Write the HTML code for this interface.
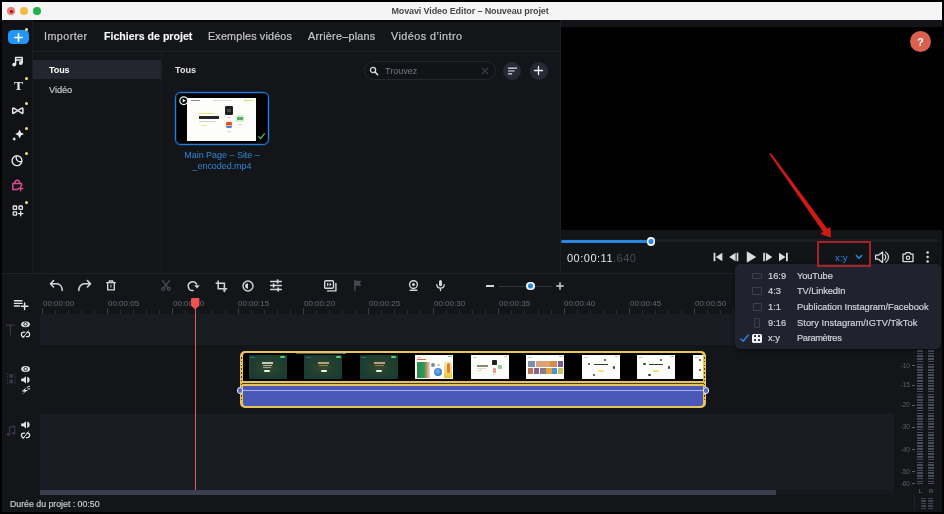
<!DOCTYPE html>
<html lang="fr">
<head>
<meta charset="utf-8">
<title>Movavi Video Editor – Nouveau projet</title>
<style>
*{box-sizing:border-box;margin:0;padding:0}
html,body{width:944px;height:514px;overflow:hidden;background:#000}
body{position:relative;font-family:"Liberation Sans",sans-serif;color:#c6c7cc;font-size:11px}
.a{position:absolute}
.t{position:absolute;white-space:nowrap;line-height:14px;height:14px;will-change:transform}
svg{position:absolute;overflow:visible}
#win{left:2px;top:2px;width:940px;height:510px;background:#141519}
.dot{position:absolute;top:7.2px;width:7.6px;height:7.6px;border-radius:50%}
.yd{position:absolute;left:25px;width:3px;height:3px;border-radius:50%;background:#f3e08a}
.tab{top:29px;font-size:10.8px;color:#c4c5ca;-webkit-text-stroke:0.2px #c4c5ca}
.mi{font-size:9.3px;color:#cfd1d8;-webkit-text-stroke:0.2px #cfd1d8}
.rl{top:298.2px;font-size:8px;color:#666975;line-height:12px;height:12px}
.ml{font-size:6.5px;color:#5d606b;line-height:8px;height:8px;width:20px;text-align:right;left:890px}
</style>
</head>
<body>
<div id="win" class="a"></div>

<!-- ===== title bar ===== -->
<div class="a" style="left:2px;top:2px;width:940px;height:18px;background:#f5f5f6"></div>
<div class="dot" style="left:7.2px;background:#ee7b78"></div>
<div class="a" style="left:9.5px;top:9.5px;width:3px;height:3px;border-radius:50%;background:#9c0a08"></div>
<div class="dot" style="left:20.2px;background:#f6bb45"></div>
<div class="dot" style="left:33.2px;background:#22b24d"></div>
<div class="t" style="left:0px;width:940px;text-align:center;top:4px;font-weight:bold;font-size:9px;letter-spacing:-0.115px;color:#48484b">Movavi Video Editor – Nouveau projet</div>

<div class="a" style="left:2px;top:20px;width:940px;height:1.5px;background:#07070a"></div>
<!-- ===== left toolbar ===== -->
<div class="a" style="left:2px;top:20px;width:30px;height:253px;background:#111216"></div>
<div class="a" style="left:32px;top:20px;width:1px;height:253px;background:#1c1d22"></div>
<div class="a" style="left:7.5px;top:29.5px;width:21px;height:14.5px;border-radius:4.5px;background:#2196f8"></div>
<svg style="left:13.5px;top:32.5px" width="9" height="9" viewBox="0 0 9 9"><path d="M4.5 0.8v7.4M0.8 4.5h7.4" stroke="#fff" stroke-width="1.7" stroke-linecap="round" fill="none"/></svg>
<div class="yd" style="top:28px"></div>
<div class="yd" style="top:77.2px"></div>
<div class="yd" style="top:102.4px"></div>
<div class="yd" style="top:126.8px"></div>
<div class="yd" style="top:151.5px"></div>
<div class="yd" style="top:201.1px"></div>
<!--LTB-START-->
<svg style="left:0;top:0" width="944" height="514" viewBox="0 0 944 514"><g fill="none" stroke="#e6e7ec" stroke-width="1.5" stroke-linejoin="round" stroke-linecap="round"><path d="M15.6 64.2V57.6H22.2V62.6M15.6 60H22.2"/></g><circle cx="14.2" cy="64.6" r="1.9" fill="#e6e7ec"/><circle cx="20.8" cy="63" r="1.9" fill="#e6e7ec"/><path d="M17.8 110.7L13.8 108.2Q12.7 107.6 12.7 108.9V112.5Q12.7 113.8 13.8 113.2L21.8 108.2Q22.9 107.6 22.9 108.9V112.5Q22.9 113.8 21.8 113.2z" fill="none" stroke="#e6e7ec" stroke-width="1.5" stroke-linejoin="round"/><path d="M19.6 129.6L21 132.6L24 134L21 135.4L19.6 138.4L18.2 135.4L15.2 134L18.2 132.6z" fill="#e6e7ec"/><path d="M14.2 137L15 138.2L16.2 139L15 139.8L14.2 141L13.4 139.8L12.2 139L13.4 138.2z" fill="#e6e7ec"/><circle cx="17" cy="160.7" r="4.9" fill="none" stroke="#e6e7ec" stroke-width="1.4"/><path d="M16.2 156.2C15.6 160 17.8 162.4 21.6 161.6" fill="none" stroke="#e6e7ec" stroke-width="1.3"/><g fill="none" stroke="#d94b8c" stroke-width="1.5" stroke-linejoin="round" stroke-linecap="round"><path d="M17.6 189.6H12.8V183.4H21.6V185.4M14.8 183.2C14.8 179.4 19.6 179.4 19.6 183.2"/><path d="M20.6 186.4V190.8M18.4 188.6H22.8"/></g><g fill="none" stroke="#e6e7ec" stroke-width="1.3"><rect x="13.2" y="206" width="3.4" height="3.4" rx=".6"/><rect x="19" y="206" width="3.4" height="3.4" rx=".6"/><rect x="13.2" y="211.8" width="3.4" height="3.4" rx=".6"/><path d="M20.7 211.4V215.8M18.5 213.6H22.9" stroke-linecap="round"/></g></svg>
<div class="t" style="left:11.5px;top:78.5px;width:13px;text-align:center;font-family:'Liberation Serif',serif;font-weight:bold;font-size:13.5px;line-height:14px;color:#e6e7ec">T</div>
<!--LTB-END-->

<!-- ===== tabs ===== -->
<div class="t tab" style="left:44px;letter-spacing:0.42px">Importer</div>
<div class="t tab" style="left:104px;color:#fff;font-weight:bold;font-size:10.6px;letter-spacing:0px">Fichiers de projet</div>
<div class="t tab" style="left:207.5px;letter-spacing:0.16px">Exemples vidéos</div>
<div class="t tab" style="left:307.5px;letter-spacing:0.25px">Arrière–plans</div>
<div class="t tab" style="left:391px;letter-spacing:0.45px">Vidéos d’intro</div>
<div class="a" style="left:33px;top:50.5px;width:527px;height:1px;background:#202127"></div>

<!-- ===== category list ===== -->
<div class="a" style="left:33px;top:60px;width:128px;height:19px;background:#23262f"></div>
<div class="t" style="left:49px;top:62.5px;color:#fff;font-weight:bold;font-size:9px;letter-spacing:-0.1px">Tous</div>
<div class="t" style="left:49px;top:82.5px;color:#c4c5ca;-webkit-text-stroke:0.2px #c4c5ca;font-size:9.2px;letter-spacing:-0.05px">Vidéo</div>
<div class="a" style="left:161px;top:51px;width:1px;height:222px;background:#1d1e24"></div>

<!-- ===== media bin ===== -->
<div class="t" style="left:175px;top:62.5px;color:#e6e6ea;font-weight:bold;font-size:9px;letter-spacing:0.1px">Tous</div>
<div class="a" style="left:363.5px;top:61px;width:132px;height:19px;border-radius:10px;border:1px solid #25272e;background:#121317"></div>
<svg style="left:368.5px;top:66px" width="10" height="10" viewBox="0 0 10 10"><circle cx="4" cy="4" r="2.6" fill="none" stroke="#d8d9de" stroke-width="1.3"/><path d="M6 6l2.6 2.6" stroke="#d8d9de" stroke-width="1.5" stroke-linecap="round"/></svg>
<div class="t" style="left:384.5px;top:63.5px;font-size:9px;color:#787a84">Trouvez</div>
<svg style="left:481px;top:66.5px" width="8" height="8" viewBox="0 0 8 8"><path d="M1 1l6 6M7 1l-6 6" stroke="#3f4149" stroke-width="1.1" fill="none"/></svg>
<div class="a" style="left:503px;top:61.5px;width:18px;height:18px;border-radius:50%;background:#262a36"></div>
<svg style="left:507.5px;top:66.5px" width="9" height="8" viewBox="0 0 9 8"><path d="M0.5 1.2h8M0.5 4h5.6M0.5 6.8h3.2" stroke="#e4e5ea" stroke-width="1.2" stroke-linecap="round" fill="none"/></svg>
<div class="a" style="left:529.5px;top:61.5px;width:18px;height:18px;border-radius:50%;background:#262a36"></div>
<svg style="left:534px;top:66px" width="9" height="9" viewBox="0 0 9 9"><path d="M4.5 0.5v8M0.5 4.5h8" stroke="#f0f0f4" stroke-width="1.3" stroke-linecap="round" fill="none"/></svg>

<!-- thumbnail -->
<div class="a" style="left:175px;top:91.6px;width:94.4px;height:53.6px;border-radius:5.5px;border:1.6px solid #2b7fd3;background:#000;box-shadow:0 0 0 1px #0f2a4a,inset 0 0 0 1px #0a1c33"></div>
<div class="a" style="left:187.2px;top:98.3px;width:69px;height:42.4px;background:#fdfdfb"></div>
<!--TH-START-->
<div class="a" style="left:191.0px;top:100.1px;width:9.0px;height:1.1px;background:#8a8a88"></div>
<div class="a" style="left:213.0px;top:100.2px;width:19.0px;height:0.9px;background:#dcdcd8"></div>
<div class="a" style="left:244.0px;top:99.6px;width:9.5px;height:1.6px;background:linear-gradient(90deg,#9be27a,#e6ee6a);border-radius:1px"></div>
<div class="a" style="left:199.0px;top:112.8px;width:15.0px;height:1.2px;background:#f0e27e"></div>
<div class="a" style="left:199.0px;top:116.4px;width:20.0px;height:2.2px;background:#262626"></div>
<div class="a" style="left:199.0px;top:121.0px;width:17.0px;height:1.0px;background:#d2d2cc"></div>
<div class="a" style="left:201.0px;top:125.0px;width:6.0px;height:1.4px;background:#f2e79a;border-radius:1px"></div>
<div class="a" style="left:224.7px;top:106.4px;width:8.6px;height:8.4px;background:#1d1d1d;border-radius:1.2px"></div>
<div class="a" style="left:226.6px;top:109.0px;width:4.8px;height:3.0px;background:#4a4a4a"></div>
<div class="a" style="left:227.0px;top:116.6px;width:4.0px;height:0.8px;background:#d0d0d0"></div>
<div class="a" style="left:236.0px;top:114.6px;width:7.8px;height:7.4px;background:#d2f2cc;border-radius:1.2px"></div>
<div class="a" style="left:237.2px;top:117.4px;width:5.4px;height:2.2px;background:#55b060"></div>
<div class="a" style="left:237.6px;top:124.0px;width:4.6px;height:0.8px;background:#d8d8d4"></div>
<div class="a" style="left:225.9px;top:121.8px;width:6.5px;height:6.5px;background:linear-gradient(180deg,#e8463e 0,#e8463e 45%,#f4c23a 45%,#f4c23a 70%,#4a7fe0 70%);border-radius:1.4px;box-shadow:0 0 2px #f3e6c0"></div>
<div class="a" style="left:227.2px;top:130.6px;width:4.0px;height:0.8px;background:#d8d8d4"></div>
<svg style="left:178.6px;top:96.2px" width="9.4" height="9.4" viewBox="0 0 9.4 9.4"><circle cx="4.7" cy="4.7" r="3.9" fill="#050505" stroke="#f2f2f2" stroke-width="1.2"/><path d="M3.7 2.8V6.6L6.8 4.7z" fill="#f2f2f2"/></svg>
<svg style="left:257.6px;top:132.6px" width="7" height="6.6" viewBox="0 0 7 6.6"><path d="M0.7 3.6L2.6 5.6L6.3 0.8" fill="none" stroke="#3fc46c" stroke-width="1.3" stroke-linecap="round" stroke-linejoin="round"/></svg>
<!--TH-END-->
<div class="t" style="left:172px;width:100px;text-align:center;top:148px;font-size:9px;color:#2f86da;letter-spacing:-0.03px">Main Page – Site –</div>
<div class="t" style="left:172px;width:100px;text-align:center;top:158.5px;font-size:9px;color:#2f86da;letter-spacing:-0.05px">_encoded.mp4</div>

<!-- ===== preview ===== -->
<div class="a" style="left:559.6px;top:20px;width:1px;height:253px;background:#1d1e24"></div>
<div class="a" style="left:560.6px;top:20px;width:381.4px;height:253px;background:#131418"></div>
<div class="a" style="left:561px;top:27px;width:381px;height:202.5px;background:#000"></div>
<div class="a" style="left:910px;top:31px;width:21px;height:21px;border-radius:50%;background:#d9614d"></div>
<div class="t" style="left:910px;width:21px;text-align:center;top:34.8px;font-size:10.5px;font-weight:bold;color:#fff">?</div>
<svg style="left:0;top:0" width="944" height="514" viewBox="0 0 944 514"><path d="M770.9 153.5L827.3 229.2L830.2 227.6L830.6 237.2L820.6 233.7L823.5 232.1L769.7 154.3z" fill="#cf1c12" stroke="#cf1c12" stroke-width="0.6" stroke-linejoin="round"/></svg>

<!-- progress -->
<div class="a" style="left:561px;top:238.6px;width:378px;height:3.6px;border-radius:1.5px;background:#1b1d23"></div>
<div class="a" style="left:561px;top:240.3px;width:90px;height:3px;border-radius:1.5px;background:#2a86e0"></div>
<div class="a" style="left:646.6px;top:237.4px;width:8.8px;height:8.8px;border-radius:50%;background:radial-gradient(circle,#2a86e0 0,#2a86e0 2.2px,#f0f5fc 2.9px)"></div>
<div class="t" style="left:566.5px;top:250.5px;font-size:11px;letter-spacing:0.5px;color:#e4e5ea">00:00:11<span style="color:#4a4c55">.640</span></div>
<!--TRANSPORT-->

<!-- ===== divider ===== -->
<div class="a" style="left:2px;top:272.5px;width:940px;height:1px;background:#22232a"></div>

<!--TL-START-->
<!-- timeline toolbar -->
<svg style="left:49px;top:279px" width="15" height="13" viewBox="0 0 15 13"><path d="M4.6 1.6 L1.4 4.8 L4.6 8 M1.6 4.8 H7.5 C11 4.8 13.2 7.6 13.2 11.6" fill="none" stroke="#d4d5dc" stroke-width="1.5" stroke-linecap="round" stroke-linejoin="round"/></svg>
<svg style="left:76.5px;top:279px" width="15" height="13" viewBox="0 0 15 13"><path d="M10.4 1.6 L13.6 4.8 L10.4 8 M13.4 4.8 H7.5 C4 4.8 1.8 7.6 1.8 11.6" fill="none" stroke="#d4d5dc" stroke-width="1.5" stroke-linecap="round" stroke-linejoin="round"/></svg>
<svg style="left:106px;top:280px" width="10" height="11" viewBox="0 0 10 11"><path d="M0.6 2.6H9.4M3.3 2.4V1h3.4v1.4M1.7 2.8V9.9h6.6V2.8" fill="none" stroke="#d4d5dc" stroke-width="1.4" stroke-linejoin="round" stroke-linecap="round"/><rect x="4.2" y="4.6" width="1.6" height="3" fill="#d4d5dc" opacity=".55"/></svg>
<svg style="left:160.5px;top:280px" width="10" height="11" viewBox="0 0 10 11"><path d="M1.6 0.6L7.2 8M8.4 0.6L2.8 8" stroke="#454753" stroke-width="1.5" stroke-linecap="round" fill="none"/><circle cx="2.2" cy="8.8" r="1.5" fill="none" stroke="#454753" stroke-width="1.3"/><circle cx="7.8" cy="8.8" r="1.5" fill="none" stroke="#454753" stroke-width="1.3"/></svg>
<svg style="left:187px;top:280px" width="13" height="12" viewBox="0 0 13 12"><path d="M9.6 4.2A4.4 4.4 0 1 0 6 10.6" fill="none" stroke="#d4d5dc" stroke-width="1.5" stroke-linecap="round"/><path d="M7.3 5.2h5.4l-2.7 3.2z" fill="#d4d5dc"/></svg>
<svg style="left:215px;top:279.5px" width="13" height="13" viewBox="0 0 13 13"><path d="M3.2 0.6V8.8H12.2M0.6 3.2H9.4V10.4" fill="none" stroke="#d4d5dc" stroke-width="1.5" stroke-linejoin="miter"/><path d="M7.6 10.2h3.6l-1.8 2.2z" fill="#d4d5dc"/><path d="M1.4 0.8h3.6L3.2 -0.6z" fill="#d4d5dc" opacity="0"/></svg>
<svg style="left:242px;top:279.5px" width="12" height="12" viewBox="0 0 12 12"><circle cx="6" cy="6" r="5" fill="none" stroke="#d4d5dc" stroke-width="1.4"/><path d="M6 3.2A2.8 2.8 0 0 0 6 8.8z" fill="#d4d5dc"/></svg>
<svg style="left:270px;top:280px" width="12" height="11" viewBox="0 0 12 11"><path d="M0.6 1.5H11.4M0.6 5.5H11.4M0.6 9.5H11.4" stroke="#d4d5dc" stroke-width="1.3" stroke-linecap="round"/><path d="M7.6 0.2v2.6M3.6 4.2v2.6M8.2 8.2v2.6" stroke="#d4d5dc" stroke-width="1.8" stroke-linecap="round"/></svg>
<svg style="left:324px;top:279.5px" width="13" height="12" viewBox="0 0 13 12"><rect x="0.7" y="0.7" width="8.8" height="7.6" rx="1" fill="none" stroke="#d4d5dc" stroke-width="1.4"/><path d="M11.9 3.4V10.9H3.6" fill="none" stroke="#d4d5dc" stroke-width="1.4" stroke-linejoin="round" stroke-linecap="round"/><path d="M3 2.6L5 4.5L3 6.4zM5.6 2.6L7.6 4.5L5.6 6.4z" fill="#d4d5dc"/></svg>
<svg style="left:354px;top:280px" width="8" height="11" viewBox="0 0 8 11"><path d="M0.8 0.4V10.8" stroke="#454753" stroke-width="1.4" stroke-linecap="round"/><path d="M1 0.8H7.4L6 3.3L7.4 5.8H1z" fill="#454753"/></svg>
<svg style="left:407.5px;top:280px" width="11" height="11" viewBox="0 0 11 11"><circle cx="5.5" cy="4.6" r="3.9" fill="none" stroke="#d4d5dc" stroke-width="1.4"/><circle cx="5.5" cy="4.6" r="1.5" fill="#d4d5dc"/><path d="M2.2 10.2H8.8" stroke="#d4d5dc" stroke-width="1.5" stroke-linecap="round"/></svg>
<svg style="left:435.5px;top:280px" width="9" height="11" viewBox="0 0 9 11"><rect x="3" y="0" width="3" height="6.2" rx="1.5" fill="#d4d5dc"/><path d="M0.8 4.6C0.8 9.4 8.2 9.4 8.2 4.6M4.5 8.2V10.6" fill="none" stroke="#d4d5dc" stroke-width="1.3" stroke-linecap="round"/></svg>
<div class="a" style="left:486px;top:285.2px;width:7.6px;height:1.5px;background:#d4d5dc"></div>
<div class="a" style="left:498.5px;top:285.5px;width:53px;height:1px;background:#33363f"></div>
<div class="a" style="left:526px;top:281.7px;width:8.8px;height:8.8px;border-radius:50%;background:radial-gradient(circle,#2a86e0 0,#2a86e0 2.2px,#f0f5fc 2.9px)"></div>
<svg style="left:556px;top:282px" width="8" height="8" viewBox="0 0 8 8"><path d="M4 0.3v7.4M0.3 4h7.4" stroke="#d4d5dc" stroke-width="1.4" fill="none"/></svg>
<!-- tracks -->
<div class="a" style="left:40px;top:314px;width:854px;height:31px;background:#1a1c24"></div>
<div class="a" style="left:40px;top:413.5px;width:854px;height:76.5px;background:#1a1c24"></div>
<div class="a" style="left:42px;top:310px;width:852px;height:4px;background:repeating-linear-gradient(90deg,#272931 0,#272931 1px,transparent 1px,transparent 13.04px)"></div>
<div class="a" style="left:42px;top:308px;width:852px;height:6px;background:repeating-linear-gradient(90deg,#3a3d48 0,#3a3d48 1px,transparent 1px,transparent 65.2px)"></div>
<div class="t rl" style="left:42.8px">00:00:00</div>
<div class="t rl" style="left:108.0px">00:00:05</div>
<div class="t rl" style="left:173.2px">00:00:10</div>
<div class="t rl" style="left:238.4px">00:00:15</div>
<div class="t rl" style="left:303.6px">00:00:20</div>
<div class="t rl" style="left:368.8px">00:00:25</div>
<div class="t rl" style="left:434.0px">00:00:30</div>
<div class="t rl" style="left:499.2px">00:00:35</div>
<div class="t rl" style="left:564.4px">00:00:40</div>
<div class="t rl" style="left:629.6px">00:00:45</div>
<div class="t rl" style="left:694.8px">00:00:50</div>
<div class="a" style="left:40px;top:490px;width:854px;height:4.5px;background:#17181d"></div>
<div class="a" style="left:40px;top:490px;width:736px;height:4.5px;background:#3b3e4d"></div>
<div class="t" style="left:10px;top:496.5px;font-size:8.8px;letter-spacing:-0.02px;color:#c9cad0;-webkit-text-stroke:0.2px #c9cad0">Durée du projet : 00:50</div>
<!-- clip -->
<div class="a" style="left:240px;top:350.5px;width:466.3px;height:57px;border-radius:5px;background:#e8c25a"></div>
<div class="a" style="left:243.4px;top:352.6px;width:459.6px;height:28.2px;border-radius:3px 3px 0 0;background:#000"></div>
<div class="a" style="left:242px;top:383.1px;width:462.3px;height:1px;background:#15161a;opacity:.75"></div>
<div class="a" style="left:243.4px;top:385.8px;width:459.6px;height:19.8px;border-radius:0 0 3px 3px;background:#4a59b8"></div>
<div class="a" style="left:243.4px;top:389.6px;width:459.6px;height:1.5px;background:#aab4ee"></div>
<div class="a" style="left:240.9px;top:357px;width:1.5px;height:45px;background:repeating-linear-gradient(180deg,#4d3f12 0,#4d3f12 1.5px,transparent 1.5px,transparent 3.8px)"></div>
<div class="a" style="left:703.9px;top:357px;width:1.5px;height:45px;background:repeating-linear-gradient(180deg,#4d3f12 0,#4d3f12 1.5px,transparent 1.5px,transparent 3.8px)"></div>
<!--CT-START-->
<div class="a" style="left:296.0px;top:353.2px;width:49.0px;height:0.9px;background:#5a5a58"></div>
<div class="a" style="left:342.0px;top:353.0px;width:4.0px;height:1.2px;background:#4a86c8"></div>
<div class="a" style="left:248.7px;top:355.3px;width:38.3px;height:23.7px;background:radial-gradient(ellipse at 50% 50%,#3b4a26 0,#24402f 40%,#143a36 100%)"></div>
<div class="a" style="left:280.2px;top:356.4px;width:5.0px;height:1.4px;background:#62c96c;border-radius:1px"></div>
<div class="a" style="left:250.2px;top:356.6px;width:5.0px;height:0.9px;background:#3f6a62"></div>
<div class="a" style="left:261.7px;top:362.3px;width:11.0px;height:1.3px;background:#c9ccb8"></div>
<div class="a" style="left:262.7px;top:364.8px;width:9.0px;height:1.2px;background:#b3b8a6"></div>
<div class="a" style="left:263.2px;top:366.8px;width:8.0px;height:1.2px;background:#9aa294"></div>
<div class="a" style="left:264.2px;top:370.3px;width:6.0px;height:1.8px;background:#f4f4ee;border-radius:1px"></div>
<div class="a" style="left:304.2px;top:355.3px;width:38.3px;height:23.7px;background:radial-gradient(ellipse at 50% 50%,#3b4a26 0,#24402f 40%,#143a36 100%)"></div>
<div class="a" style="left:335.7px;top:356.4px;width:5.0px;height:1.4px;background:#62c96c;border-radius:1px"></div>
<div class="a" style="left:305.7px;top:356.6px;width:5.0px;height:0.9px;background:#3f6a62"></div>
<div class="a" style="left:318.2px;top:362.3px;width:11.0px;height:1.3px;background:#b9a27e"></div>
<div class="a" style="left:319.2px;top:364.8px;width:9.0px;height:1.2px;background:#8a7d62"></div>
<div class="a" style="left:320.7px;top:370.3px;width:6.0px;height:1.8px;background:#f4f4ee;border-radius:1px"></div>
<div class="a" style="left:359.7px;top:355.3px;width:38.3px;height:23.7px;background:radial-gradient(ellipse at 50% 50%,#3b4a26 0,#24402f 40%,#143a36 100%)"></div>
<div class="a" style="left:391.2px;top:356.4px;width:5.0px;height:1.4px;background:#62c96c;border-radius:1px"></div>
<div class="a" style="left:361.2px;top:356.6px;width:5.0px;height:0.9px;background:#3f6a62"></div>
<div class="a" style="left:373.7px;top:362.3px;width:11.0px;height:1.3px;background:#b9a27e"></div>
<div class="a" style="left:374.7px;top:364.8px;width:9.0px;height:1.2px;background:#8a7d62"></div>
<div class="a" style="left:376.2px;top:370.3px;width:6.0px;height:1.8px;background:#f4f4ee;border-radius:1px"></div>
<div class="a" style="left:415.2px;top:355.3px;width:38.3px;height:23.7px;background:#fcfcf8"></div>
<div class="a" style="left:417.0px;top:356.5px;width:4.0px;height:0.8px;background:#c8c8c0"></div>
<div class="a" style="left:448.2px;top:356.3px;width:3.5px;height:1.2px;background:#7fd08a"></div>
<div class="a" style="left:417.2px;top:359.1px;width:9.0px;height:1.3px;background:#e2672e"></div>
<div class="a" style="left:417.0px;top:362.3px;width:12.6px;height:15.5px;background:linear-gradient(90deg,#1f8a4c 0,#2d9a58 55%,#c98e6a 75%,#e6dccb 100%)"></div>
<div class="a" style="left:430.7px;top:362.8px;width:4.5px;height:4.0px;background:#8a8a86;border-radius:2px"></div>
<div class="a" style="left:437.2px;top:363.8px;width:3.0px;height:2.5px;background:#b9c6d8;border-radius:1px"></div>
<div class="a" style="left:433.7px;top:367.8px;width:8.5px;height:8.5px;background:radial-gradient(circle at 45% 40%,#7fb2e6 0,#2f78c8 70%);border-radius:50%"></div>
<div class="a" style="left:443.7px;top:362.3px;width:8.5px;height:15.5px;background:linear-gradient(180deg,#f3e7a8 0,#f0d457 70%,#e9c230 100%)"></div>
<div class="a" style="left:446.7px;top:363.3px;width:3.0px;height:10.0px;background:#d9623a;border-radius:1.5px;opacity:.8"></div>
<div class="a" style="left:470.7px;top:355.3px;width:38.3px;height:23.7px;background:#fdfdfb"></div>
<div class="a" style="left:472.5px;top:356.5px;width:4.0px;height:0.8px;background:#d0d0c8"></div>
<div class="a" style="left:503.7px;top:356.3px;width:3.5px;height:1.2px;background:#9bdca4"></div>
<div class="a" style="left:477.2px;top:365.3px;width:11.0px;height:1.3px;background:#8d8a70"></div>
<div class="a" style="left:477.2px;top:367.8px;width:9.0px;height:0.9px;background:#dcdccf"></div>
<div class="a" style="left:477.7px;top:370.3px;width:4.0px;height:1.0px;background:#e8dc9c"></div>
<div class="a" style="left:492.0px;top:360.1px;width:4.6px;height:4.6px;background:#232323;border-radius:.8px"></div>
<div class="a" style="left:497.9px;top:364.9px;width:4.4px;height:4.6px;background:#8fcf8c;border-radius:.8px"></div>
<div class="a" style="left:492.5px;top:367.8px;width:3.6px;height:5.0px;background:#e79a8a;border-radius:.8px"></div>
<div class="a" style="left:492.7px;top:373.6px;width:3.0px;height:0.8px;background:#d8d8d0"></div>
<div class="a" style="left:526.2px;top:355.3px;width:38.3px;height:23.7px;background:#fdfdfb"></div>
<div class="a" style="left:528.0px;top:356.5px;width:4.0px;height:0.8px;background:#d0d0c8"></div>
<div class="a" style="left:559.2px;top:356.3px;width:3.5px;height:1.2px;background:#9bdca4"></div>
<div class="a" style="left:528.0px;top:361.3px;width:7.1px;height:5.6px;background:#7f8fa6"></div>
<div class="a" style="left:535.5px;top:361.3px;width:7.1px;height:5.6px;background:#d9a27e"></div>
<div class="a" style="left:543.0px;top:361.3px;width:6.6px;height:5.6px;background:#e2a36b"></div>
<div class="a" style="left:550.0px;top:361.3px;width:7.1px;height:5.6px;background:#d48a52"></div>
<div class="a" style="left:557.5px;top:361.3px;width:5.1px;height:5.6px;background:#7a5e8e"></div>
<div class="a" style="left:528.0px;top:367.9px;width:5.1px;height:5.8px;background:#b7764f"></div>
<div class="a" style="left:533.5px;top:367.9px;width:5.6px;height:5.8px;background:#8a5f94"></div>
<div class="a" style="left:539.5px;top:367.9px;width:6.1px;height:5.8px;background:#8a7a90"></div>
<div class="a" style="left:546.0px;top:367.9px;width:5.6px;height:5.8px;background:#e0a33e"></div>
<div class="a" style="left:552.0px;top:367.9px;width:5.1px;height:5.8px;background:#4f8fd6"></div>
<div class="a" style="left:557.5px;top:367.9px;width:5.1px;height:5.8px;background:#c8c35a"></div>
<div class="a" style="left:581.7px;top:355.3px;width:38.3px;height:23.7px;background:#fdfdfb"></div>
<div class="a" style="left:583.5px;top:356.5px;width:4.0px;height:0.8px;background:#d0d0c8"></div>
<div class="a" style="left:614.7px;top:356.3px;width:3.5px;height:1.2px;background:#9bdca4"></div>
<div class="a" style="left:593.7px;top:363.8px;width:14.0px;height:1.2px;background:#3a3a38"></div>
<div class="a" style="left:597.7px;top:370.3px;width:6.2px;height:1.8px;background:#f0e27a;border-radius:1px"></div>
<div class="a" style="left:604.0px;top:358.5px;width:2.4px;height:2.4px;background:#3c4038;border-radius:50%"></div>
<div class="a" style="left:587.7px;top:362.5px;width:2.4px;height:2.4px;background:#3c4038;border-radius:50%"></div>
<div class="a" style="left:612.5px;top:366.3px;width:2.4px;height:2.4px;background:#3c4038;border-radius:50%"></div>
<div class="a" style="left:592.7px;top:373.8px;width:2.4px;height:2.4px;background:#3c4038;border-radius:50%"></div>
<div class="a" style="left:637.2px;top:355.3px;width:38.3px;height:23.7px;background:#fdfdfb"></div>
<div class="a" style="left:639.0px;top:356.5px;width:4.0px;height:0.8px;background:#d0d0c8"></div>
<div class="a" style="left:670.2px;top:356.3px;width:3.5px;height:1.2px;background:#9bdca4"></div>
<div class="a" style="left:649.2px;top:363.8px;width:14.0px;height:1.2px;background:#3a3a38"></div>
<div class="a" style="left:653.2px;top:370.3px;width:6.2px;height:1.8px;background:#f0e27a;border-radius:1px"></div>
<div class="a" style="left:659.5px;top:358.5px;width:2.4px;height:2.4px;background:#3c4038;border-radius:50%"></div>
<div class="a" style="left:643.2px;top:362.5px;width:2.4px;height:2.4px;background:#3c4038;border-radius:50%"></div>
<div class="a" style="left:668.0px;top:366.3px;width:2.4px;height:2.4px;background:#3c4038;border-radius:50%"></div>
<div class="a" style="left:648.2px;top:373.8px;width:2.4px;height:2.4px;background:#3c4038;border-radius:50%"></div>
<div class="a" style="left:692.7px;top:355.3px;width:10.3px;height:23.7px;background:#fdfdfb"></div>
<div class="a" style="left:694.5px;top:356.5px;width:4.0px;height:0.8px;background:#d0d0c8"></div>
<div class="a" style="left:698.7px;top:358.9px;width:2.2px;height:2.2px;background:#3c4038;border-radius:50%"></div>
<div class="a" style="left:698.9px;top:368.8px;width:2.2px;height:2.2px;background:#3c4038;border-radius:50%"></div>
<!--CT-END-->
<div class="a" style="left:237.0px;top:387.2px;width:6.4px;height:6.4px;border-radius:50%;background:#5a68c0;border:1.5px solid #e6e9f6"></div>
<div class="a" style="left:702.8px;top:387.2px;width:6.4px;height:6.4px;border-radius:50%;background:#5a68c0;border:1.5px solid #e6e9f6"></div>
<!-- playhead -->
<div class="a" style="left:194.6px;top:305px;width:1.3px;height:185px;background:#d6625d"></div>
<svg style="left:191px;top:298.3px" width="8.4" height="11" viewBox="0 0 8.4 11"><path d="M1.2 0H7.2Q8.4 0 8.4 1.2V7.6L4.9 10.8H3.5L0 7.6V1.2Q0 0 1.2 0z" fill="#f0534f"/></svg>
<!--HDR-START-->
<svg style="left:0;top:0" width="944" height="514" viewBox="0 0 944 514"><path d="M14.4 300.8H22M14.4 303.4H22M14.4 306H19.4" stroke="#e2e3e8" stroke-width="1.4" stroke-linecap="round" fill="none"/><path d="M24.6 303V309.6M21.3 306.3H27.9" stroke="#e2e3e8" stroke-width="1.5" stroke-linecap="round" fill="none"/><path d="M6 325.2H14.8M10.4 325.2V335.2" stroke="#343747" stroke-width="1.2" fill="none"/><ellipse cx="25.5" cy="324.3" rx="4.4" ry="2.9" fill="#e2e3e8"/><circle cx="25.5" cy="324.3" r="1.7" fill="none" stroke="#15161a" stroke-width="0.9"/><g fill="none" stroke="#e2e3e8" stroke-width="1.25" stroke-linecap="round"><path d="M24.6 332.2H23.6A2.2 2.2 0 0 0 23.6 336.6H24.0M26.4 336.6H27.4A2.2 2.2 0 0 0 27.4 332.2H27.0"/><path d="M22.9 337.8L28.3 330.9" stroke-width="1"/></g><g fill="#343747"><rect x="9.4" y="374" width="3.6" height="3.8"/><rect x="9.4" y="379.6" width="3.6" height="3.8"/></g><path d="M7.4 373.2V384.4M15 373.2V384.4" stroke="#343747" stroke-width="1.1" stroke-dasharray="1.6 1.4"/><ellipse cx="25.6" cy="369" rx="4.4" ry="2.9" fill="#e2e3e8"/><circle cx="25.6" cy="369" r="1.7" fill="none" stroke="#15161a" stroke-width="0.9"/><path d="M21.200000000000003 378.5H23.200000000000003L26.0 376.29999999999995V383.5L23.200000000000003 381.29999999999995H21.200000000000003z" fill="#e2e3e8"/><path d="M27.200000000000003 376.7A3.3 3.3 0 0 1 27.200000000000003 383.09999999999997z" fill="#e2e3e8"/><path d="M26.0 387.40000000000003L21.799999999999997 391.40000000000003H24.799999999999997L21.599999999999998 394.8L28.0 390.0H25.2z" fill="#e2e3e8"/><path d="M27.2 387.20000000000005L29.599999999999998 386.20000000000005M27.799999999999997 389.0L29.799999999999997 388.8" stroke="#e2e3e8" stroke-width="1" stroke-linecap="round"/><path d="M9.6 434.2V427.2L14.8 426.2V433" fill="none" stroke="#343747" stroke-width="1.2" stroke-linejoin="round"/><ellipse cx="8.4" cy="434.4" rx="1.6" ry="1.3" fill="#343747"/><ellipse cx="13.6" cy="433.2" rx="1.6" ry="1.3" fill="#343747"/><path d="M21.200000000000003 423.40000000000003H23.200000000000003L26.0 421.2V428.40000000000003L23.200000000000003 426.2H21.200000000000003z" fill="#e2e3e8"/><path d="M27.200000000000003 421.6A3.3 3.3 0 0 1 27.200000000000003 428.0z" fill="#e2e3e8"/><g fill="none" stroke="#e2e3e8" stroke-width="1.25" stroke-linecap="round"><path d="M24.6 433.1H23.6A2.2 2.2 0 0 0 23.6 437.5H24.0M26.4 437.5H27.4A2.2 2.2 0 0 0 27.4 433.1H27.0"/><path d="M22.9 438.7L28.3 431.8" stroke-width="1"/></g></svg>
<!-- meter -->
<div class="a" style="left:917.2px;top:349.5px;width:6.2px;height:134.6px;background:repeating-linear-gradient(180deg,#454a5c 0,#454a5c 1.6px,transparent 1.6px,transparent 2.72px)"></div>
<div class="a" style="left:927.8px;top:349.5px;width:6.2px;height:134.6px;background:repeating-linear-gradient(180deg,#454a5c 0,#454a5c 1.6px,transparent 1.6px,transparent 2.72px)"></div>
<div class="t ml" style="top:361.5px">-10</div>
<div class="a" style="left:912px;top:365.1px;width:3px;height:1px;background:#5b5e6a"></div>
<div class="t ml" style="top:381.0px">-15</div>
<div class="a" style="left:912px;top:384.6px;width:3px;height:1px;background:#5b5e6a"></div>
<div class="t ml" style="top:401.0px">-20</div>
<div class="a" style="left:912px;top:404.6px;width:3px;height:1px;background:#5b5e6a"></div>
<div class="t ml" style="top:423.0px">-30</div>
<div class="a" style="left:912px;top:426.6px;width:3px;height:1px;background:#5b5e6a"></div>
<div class="t ml" style="top:445.7px">-40</div>
<div class="a" style="left:912px;top:449.3px;width:3px;height:1px;background:#5b5e6a"></div>
<div class="t ml" style="top:467.8px">-50</div>
<div class="a" style="left:912px;top:471.4px;width:3px;height:1px;background:#5b5e6a"></div>
<div class="t ml" style="top:479.8px">-60</div>
<div class="a" style="left:912px;top:483.4px;width:3px;height:1px;background:#5b5e6a"></div>
<div class="t" style="left:917.2px;top:487px;width:6.2px;text-align:center;font-size:6px;line-height:8px;height:8px;color:#6a6d78">L</div>
<div class="t" style="left:927.8px;top:487px;width:6.2px;text-align:center;font-size:6px;line-height:8px;height:8px;color:#6a6d78">R</div>
<div class="a" style="left:920.6px;top:497.5px;width:5.8px;height:11.5px;background:repeating-linear-gradient(180deg,#3d4150 0,#3d4150 1.5px,transparent 1.5px,transparent 2.5px)"></div>
<div class="a" style="left:927.6px;top:497.5px;width:5.8px;height:11.5px;background:repeating-linear-gradient(180deg,#3d4150 0,#3d4150 1.5px,transparent 1.5px,transparent 2.5px)"></div>
<div class="a" style="left:913.5px;top:496px;width:1px;height:14px;background:#22242b"></div>
<!--HDR-END-->
<!--TL-END-->

<!--MENU-START-->
<!-- transport -->
<svg style="left:0;top:0" width="944" height="514" viewBox="0 0 944 514"><g fill="#dcdde3"><rect x="713.6" y="252.8" width="1.8" height="8.4"/><path d="M722.4 252.8V261.2L715.8 257z"/><path d="M735.6 252.8V261.2L729.2 257z"/><rect x="736.6" y="252.8" width="1.7" height="8.4"/><path d="M746.8 251.2V262.8L756.2 257z"/><rect x="763.2" y="252.8" width="1.7" height="8.4"/><path d="M765.9 252.8V261.2L772.3 257z"/><path d="M779 252.8V261.2L785.6 257z"/><rect x="786" y="252.8" width="1.8" height="8.4"/></g><path d="M875.6 255.2H878.4L882.6 252V262.4L878.4 259.2H875.6z" fill="none" stroke="#dcdde3" stroke-width="1.3" stroke-linejoin="round"/><path d="M884.6 254.6A3.4 3.4 0 0 1 884.6 259.8M885.8 252.2A6 6 0 0 1 885.8 262.2" fill="none" stroke="#dcdde3" stroke-width="1.2" stroke-linecap="round"/><path d="M903 254.2H905.2L906.2 252.6H909.8L910.8 254.2H913V261.6H903z" fill="none" stroke="#dcdde3" stroke-width="1.3" stroke-linejoin="round"/><circle cx="908" cy="257.8" r="1.7" fill="none" stroke="#dcdde3" stroke-width="1.2"/><circle cx="927.6" cy="252.6" r="1.25" fill="#dcdde3"/><circle cx="927.6" cy="257" r="1.25" fill="#dcdde3"/><circle cx="927.6" cy="261.4" r="1.25" fill="#dcdde3"/><path d="M856.4 255.6L859 258.2L861.6 255.6" fill="none" stroke="#2a86e0" stroke-width="1.5" stroke-linecap="round" stroke-linejoin="round"/></svg>
<div class="t" style="left:835.4px;top:250.5px;font-size:9.6px;letter-spacing:0.15px;color:#2a86e0">x:y</div>
<!-- aspect menu -->
<div class="a" style="left:734.5px;top:264.3px;width:206px;height:84.7px;border-radius:5px;background:#20232d;box-shadow:0 1px 4px rgba(0,0,0,.5)"></div>
<div class="t mi" style="left:768.2px;top:268.7px">16:9</div>
<div class="t mi" style="left:796.5px;top:268.7px;letter-spacing:-0.12px">YouTube</div>
<div class="t mi" style="left:768.2px;top:284.2px">4:3</div>
<div class="t mi" style="left:796.5px;top:284.2px;letter-spacing:-0.11px">TV/LinkedIn</div>
<div class="t mi" style="left:768.2px;top:300.0px">1:1</div>
<div class="t mi" style="left:796.5px;top:300.0px;letter-spacing:-0.04px">Publication Instagram/Facebook</div>
<div class="t mi" style="left:768.2px;top:315.7px">9:16</div>
<div class="t mi" style="left:796.5px;top:315.7px;letter-spacing:0.05px">Story Instagram/IGTV/TikTok</div>
<div class="t mi" style="left:768.2px;top:331.3px">x:y</div>
<div class="t mi" style="left:796.5px;top:331.3px;letter-spacing:-0.36px">Paramètres</div>
<div class="a" style="left:752px;top:272.6px;width:10.4px;height:6.2px;border:1.2px solid #3b3f4f;border-radius:1px"></div>
<div class="a" style="left:752.4px;top:287px;width:9.6px;height:8.2px;border:1.2px solid #3b3f4f;border-radius:1px"></div>
<div class="a" style="left:753px;top:302.8px;width:8.6px;height:8.4px;border:1.2px solid #3b3f4f;border-radius:1px"></div>
<div class="a" style="left:754.4px;top:317.5px;width:6px;height:10.4px;border:1.2px solid #3b3f4f;border-radius:1px"></div>
<div class="a" style="left:752.4px;top:333.5px;width:9.8px;height:9.6px;border-radius:1.5px;background:#f2f3f6"></div>
<div class="a" style="left:754.3px;top:335.4px;width:2px;height:2px;border-radius:.5px;background:#262935"></div>
<div class="a" style="left:758.3px;top:335.4px;width:2px;height:2px;border-radius:.5px;background:#262935"></div>
<div class="a" style="left:754.3px;top:339.2px;width:2px;height:2px;border-radius:.5px;background:#262935"></div>
<div class="a" style="left:758.3px;top:339.2px;width:2px;height:2px;border-radius:.5px;background:#262935"></div>
<svg style="left:739.5px;top:334px" width="9" height="9" viewBox="0 0 9 9"><path d="M0.9 4.9L3.2 7.3L8 1.2" fill="none" stroke="#2a86e0" stroke-width="1.5" stroke-linecap="round" stroke-linejoin="round"/></svg>
<!--MENU-END-->
<div class="a" style="left:817px;top:241px;width:53.5px;height:26px;border:2px solid #a32327"></div>


<!-- black frame -->
<div class="a" style="left:0;top:0;width:944px;height:2px;background:#000"></div>
<div class="a" style="left:0;top:512px;width:944px;height:2px;background:#000"></div>
<div class="a" style="left:0;top:0;width:2px;height:514px;background:#000"></div>
<div class="a" style="left:942px;top:0;width:2px;height:514px;background:#000"></div>
</body>
</html>
